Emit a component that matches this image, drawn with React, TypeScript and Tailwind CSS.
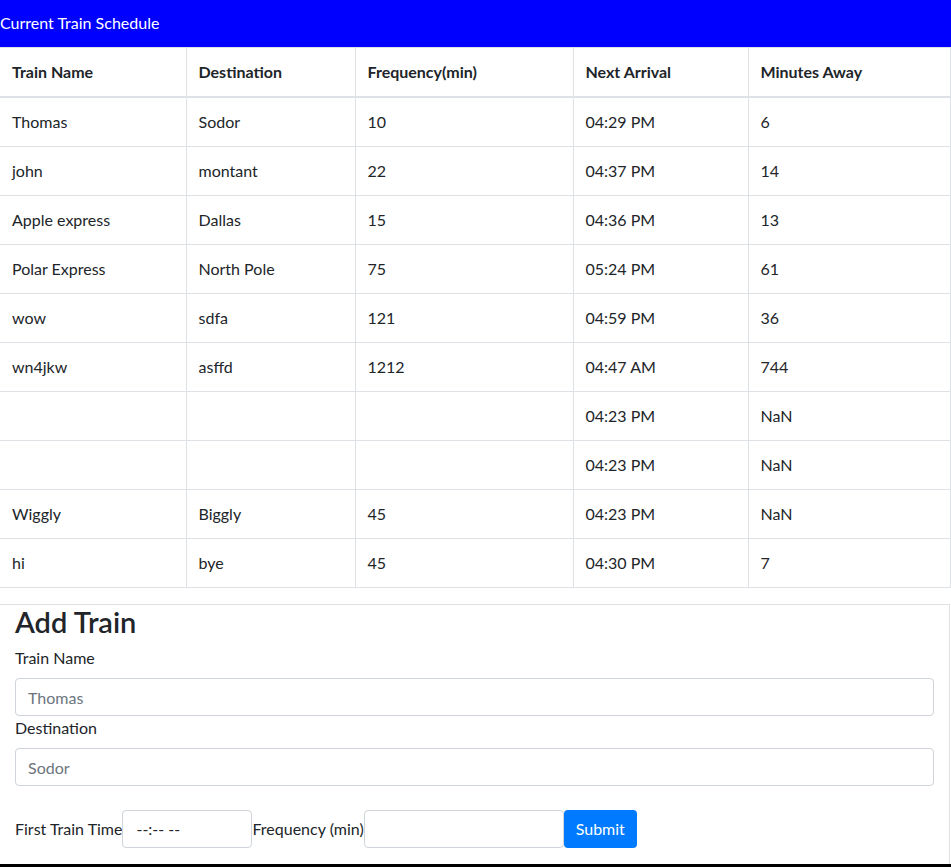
import React from 'react';

const rows = [
  ['Thomas', 'Sodor', '10', '04:29 PM', '6'],
  ['john', 'montant', '22', '04:37 PM', '14'],
  ['Apple express', 'Dallas', '15', '04:36 PM', '13'],
  ['Polar Express', 'North Pole', '75', '05:24 PM', '61'],
  ['wow', 'sdfa', '121', '04:59 PM', '36'],
  ['wn4jkw', 'asffd', '1212', '04:47 AM', '744'],
  ['', '', '', '04:23 PM', 'NaN'],
  ['', '', '', '04:23 PM', 'NaN'],
  ['Wiggly', 'Biggly', '45', '04:23 PM', 'NaN'],
  ['hi', 'bye', '45', '04:30 PM', '7'],
];

const headers = ['Train Name', 'Destination', 'Frequency(min)', 'Next Arrival', 'Minutes Away'];

export default function App() {
  return (
    <div className="w-[951px] h-[867px] overflow-hidden bg-white text-[16px] leading-6 text-[#212529] font-['Lato','Noto_Sans',sans-serif] flex flex-col">
      <div className="h-[47px] shrink-0 bg-[#0000ff] text-white flex items-center pb-[2px]">Current Train Schedule</div>

      <table className="table-fixed border-collapse w-[950px] mb-4">
        <colgroup>
          <col className="w-[186px]" />
          <col className="w-[169px]" />
          <col className="w-[218px]" />
          <col className="w-[175px]" />
          <col className="w-[202px]" />
        </colgroup>
        <thead>
          <tr>
            {headers.map((h, i) => (
              <th
                key={h}
                className={`text-left font-bold px-3 py-3 border border-[#dee2e6] border-b-2 ${i === 0 ? 'border-l-0' : ''}`}
              >
                {h}
              </th>
            ))}
          </tr>
        </thead>
        <tbody>
          {rows.map((r, ri) => (
            <tr key={ri} className="h-[49px]">
              {r.map((c, ci) => (
                <td key={ci} className={`px-3 py-3 border border-[#dee2e6] ${ci === 0 ? 'border-l-0' : ''}`}>
                  {c}
                </td>
              ))}
            </tr>
          ))}
        </tbody>
      </table>

      <div className="w-[950px] flex-1 border border-l-0 border-b-0 border-[#dee2e6] px-[15px] flex flex-col">
        <h3 className="text-[29px] leading-[33px] font-semibold mb-2">Add Train</h3>
        <div>
          <label className="block mb-2">Train Name</label>
          <input
            placeholder="Thomas"
            className="block w-full h-[38px] px-3 border border-[#ced4da] rounded bg-white placeholder:text-[#6c757d] outline-none"
          />
        </div>
        <div>
          <label className="block mb-2">Destination</label>
          <input
            placeholder="Sodor"
            className="block w-full h-[38px] px-3 border border-[#ced4da] rounded bg-white placeholder:text-[#6c757d] outline-none"
          />
        </div>
        <div className="flex items-center mt-6">
          <label>First Train Time</label>
          <div className="w-[130px] h-[38px] border border-[#ced4da] rounded flex items-center px-[13px] text-[#212529]">
            --:-- --
          </div>
          <label>Frequency (min)</label>
          <input className="w-[200px] h-[38px] px-3 border border-[#ced4da] rounded bg-white outline-none" />
          <button className="h-[38px] px-3 bg-[#007bff] text-white rounded">Submit</button>
        </div>
      </div>
      <div className="h-[3px] shrink-0 bg-black" />
    </div>
  );
}
